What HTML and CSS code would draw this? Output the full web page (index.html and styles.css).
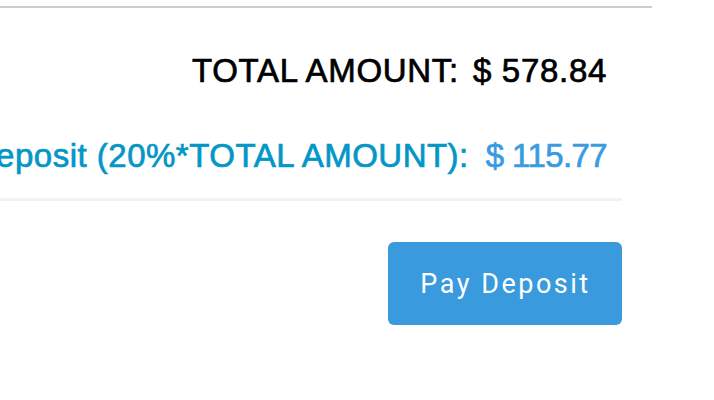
FILE: index.html
```html
<!DOCTYPE html>
<html>
<head>
<meta charset="utf-8">
<link rel="stylesheet" href="styles.css">
</head>
<body>
<div class="topline"></div>
<div class="summary">
  <div class="row total">
    <span class="label">TOTAL AMOUNT:</span>
    <span class="value">$ 578.84</span>
  </div>
  <div class="row deposit">
    <span class="label">Deposit (20%*TOTAL AMOUNT):</span>
    <span class="value">$ 115.77</span>
  </div>
  <div class="sep"></div>
  <div class="actions">
    <button class="pay">Pay Deposit</button>
  </div>
</div>
</body>
</html>
```
FILE: styles.css
```css
html, body {
  margin: 0;
  padding: 0;
  background: #fff;
  overflow: hidden;
}
body {
  width: 714px;
  height: 400px;
  font-family: "Liberation Sans", Arial, sans-serif;
}
.topline {
  width: 652px;
  height: 0;
  margin-top: 6px;
  border-top: 2px solid #cccccc;
}
.summary {
  width: 622px;
}
.row {
  display: flex;
  justify-content: flex-end;
  align-items: baseline;
  gap: 14px;
  padding-right: 15px;
  white-space: nowrap;
  font-size: 33px;
  font-weight: 400;
  line-height: 36px;
  letter-spacing: 0.7px;
  -webkit-text-stroke: 0.7px currentColor;
}
.total {
  margin-top: 45px;
  color: #000;
}
.deposit {
  margin-top: 49px;
  gap: 17px;
  color: #0396c6;
}
.deposit .label {
  letter-spacing: 0.5px;
}
.deposit .value {
  color: #3b9be0;
  letter-spacing: -0.6px;
}
.sep {
  margin-top: 24px;
  height: 3px;
  background: #f2f2f2;
}
.actions {
  display: flex;
  justify-content: flex-end;
  margin-top: 41px;
}
.pay {
  width: 234px;
  height: 83px;
  border: none;
  border-radius: 6px;
  background: #3a9ade;
  color: #fff;
  font-family: Roboto, sans-serif;
  font-size: 27px;
  letter-spacing: 2.5px;
  padding: 0 0 0 1px;
  cursor: pointer;
}
```
